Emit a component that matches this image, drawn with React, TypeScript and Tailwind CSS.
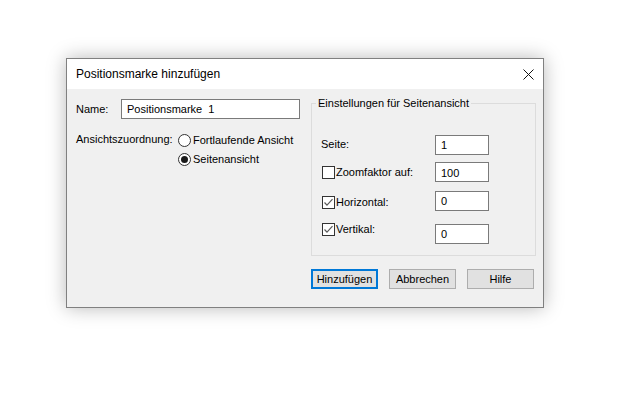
import type { ReactNode } from "react";

const font = { fontFamily: '"Liberation Sans", Arial, sans-serif' };

function Radio({ checked, children }: { checked?: boolean; children: ReactNode }) {
  return (
    <div className="flex h-[19px] items-center">
      <span className="flex h-[13px] w-[13px] items-center justify-center rounded-full border border-[#333333] bg-white">
        {checked ? <span className="h-[7px] w-[7px] rounded-full bg-[#1a1a1a]" /> : null}
      </span>
      <span className="ml-[2px]">{children}</span>
    </div>
  );
}

function Check({ checked, children }: { checked?: boolean; children: ReactNode }) {
  return (
    <div className="flex items-center pl-[1px]">
      <span className="flex h-[13px] w-[13px] items-center justify-center border border-[#333333] bg-white">
        {checked ? (
          <svg width="11" height="11" viewBox="0 0 11 11" fill="none">
            <path d="M1.5 5.5 L4 8.2 L9.5 2.2" stroke="#5a5a5a" strokeWidth="1.2" />
          </svg>
        ) : null}
      </span>
      <span className="ml-[1px]">{children}</span>
    </div>
  );
}

function Field({ value, className = "" }: { value: string; className?: string }) {
  return (
    <div
      className={`flex h-[20px] w-[54px] items-center border border-[#7a7a7a] bg-white pl-[5px] ${className}`}
    >
      {value}
    </div>
  );
}

function Btn({ primary, children }: { primary?: boolean; children: ReactNode }) {
  return (
    <button
      className={`flex h-[20px] w-[67px] items-center justify-center bg-[#e1e1e1] ${
        primary ? "border-2 border-[#0078d7]" : "border border-[#adadad]"
      }`}
    >
      {children}
    </button>
  );
}

export default function App() {
  return (
    <div className="h-[414px] w-[629px] bg-white pl-[66px] pt-[58px] text-[11px] text-black" style={font}>
      <div className="flex h-[250px] w-[478px] flex-col border border-[#808080] bg-[#f0f0f0] shadow-[0_0_18px_rgba(0,0,0,0.28)]">
        <div className="flex h-[30px] items-center justify-between bg-white pl-[9px] pr-[9px]">
          <span className="text-[12px]">Positionsmarke hinzufügen</span>
          <svg width="11" height="11" viewBox="0 0 11 11">
            <path d="M0.5 0.5 L10.5 10.5 M10.5 0.5 L0.5 10.5" stroke="#111" strokeWidth="1" />
          </svg>
        </div>

        <div className="flex pl-[9px] pr-[7px] pt-[6px]">
          <div className="w-[235px] pt-[4px]">
            <div className="flex items-center">
              <span className="w-[45px]">Name:</span>
              <div className="flex h-[20px] w-[179px] items-center border border-[#7a7a7a] bg-white pl-[5px]">
                Positionsmarke&nbsp;&nbsp;1
              </div>
            </div>
            <div className="mt-[12px] flex">
              <span className="w-[102px]">Ansichtszuordnung:</span>
              <div className="flex flex-col">
                <Radio>Fortlaufende Ansicht</Radio>
                <Radio checked>Seitenansicht</Radio>
              </div>
            </div>
          </div>

          <fieldset className="h-[161px] w-[225px] border border-[#dcdcdc] pl-[9px]">
            <legend className="ml-[-5px] px-[2px] leading-[16px]">Einstellungen für Seitenansicht</legend>
            <div className="mt-[24px] flex flex-col">
              <div className="flex">
                <div className="flex h-[18px] w-[114px] items-center">Seite:</div>
                <Field value="1" />
              </div>
              <div className="mt-[7px] flex">
                <div className="flex h-[21px] w-[114px] items-center">
                  <Check>Zoomfaktor auf:</Check>
                </div>
                <Field value="100" className="!items-start pt-[2px]" />
              </div>
              <div className="mt-[8px] flex">
                <div className="flex h-[22px] w-[114px] items-center">
                  <Check checked>Horizontal:</Check>
                </div>
                <Field value="0" />
              </div>
              <div className="mt-[11px] flex">
                <div className="flex h-[10px] w-[114px] items-center">
                  <Check checked>Vertikal:</Check>
                </div>
                <Field value="0" />
              </div>
            </div>
          </fieldset>
        </div>

        <div className="mr-[9px] mt-[13px] flex justify-end gap-[11px]">
          <Btn primary>Hinzufügen</Btn>
          <Btn>Abbrechen</Btn>
          <Btn>Hilfe</Btn>
        </div>
      </div>
    </div>
  );
}
